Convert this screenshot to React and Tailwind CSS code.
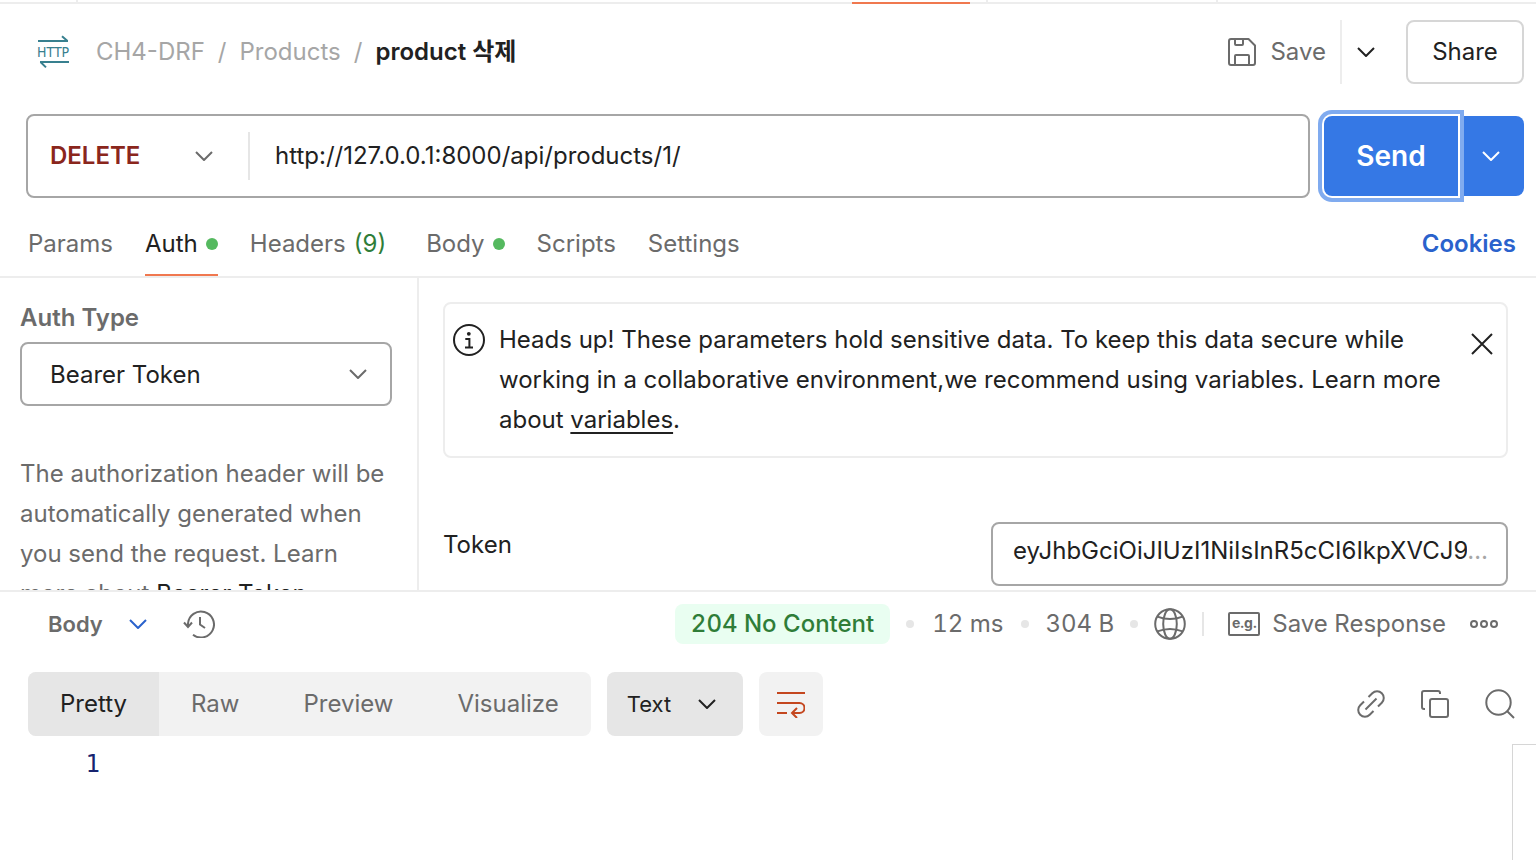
import React from "react";

const FONT = "font-['Inter','Noto_Sans_CJK_KR',sans-serif]";

function Svg({ w, h, className = "", sw = 2, children }) {
  return (
    <svg
      width={w}
      height={h}
      viewBox={`0 0 ${w} ${h}`}
      fill="none"
      stroke="currentColor"
      strokeWidth={sw}
      className={`shrink-0 ${className}`}
      aria-hidden="true"
    >
      {children}
    </svg>
  );
}

function Chevron({ className = "" }) {
  return (
    <Svg w={18} h={12} className={className}>
      <path d="M1 2L9 10L17 2" strokeLinejoin="round" />
    </Svg>
  );
}

function HttpIcon() {
  return (
    <Svg w={36} h={34} className="text-[#38808f]">
      <path d="M2 6H32M26 1.2L31.5 6" />
      <path d="M33 27H4M10 32.4L4.5 27" />
      <text
        x="1"
        y="21.5"
        fill="currentColor"
        stroke="none"
        className="font-['DejaVu_Sans_Condensed','DejaVu_Sans',sans-serif] text-[14px]"
      >
        HTTP
      </text>
    </Svg>
  );
}

function SaveIcon() {
  return (
    <Svg w={28} h={28}>
      <path d="M3 1H20.5L27 7.5V25a2 2 0 0 1-2 2H3a2 2 0 0 1-2-2V3a2 2 0 0 1 2-2Z" strokeLinejoin="round" />
      <path d="M7 1V6a1 1 0 0 0 1 1h6a1 1 0 0 0 1-1V1M7 27V18a1 1 0 0 1 1-1H20a1 1 0 0 1 1 1V27" />
    </Svg>
  );
}

function InfoIcon() {
  return (
    <Svg w={32} h={32}>
      <circle cx="16" cy="16" r="15" />
      <circle cx="15.8" cy="9.8" r="1.9" fill="currentColor" stroke="none" />
      <path d="M12.3 15H16.4V23.2M12 23.6H20" />
    </Svg>
  );
}

function CloseIcon() {
  return (
    <Svg w={22} h={22}>
      <path d="M1 1L21 21M21 1L1 21" />
    </Svg>
  );
}

function HistoryIcon() {
  return (
    <Svg w={32} h={28}>
      <path d="M5 16.5V13.5A13 13 0 1 1 10 24.8" />
      <path d="M1 12.5L5 17L9 12.5" />
      <path d="M17 7V14.5L22 18" />
    </Svg>
  );
}

function GlobeIcon() {
  return (
    <Svg w={32} h={32}>
      <circle cx="16" cy="16" r="14.8" />
      <ellipse cx="16" cy="16" rx="6.8" ry="14.8" />
      <path d="M3.4 8.6Q16 13.6 28.6 8.6M3.4 23.4Q16 18.4 28.6 23.4" />
    </Svg>
  );
}

function MoreIcon() {
  return (
    <Svg w={28} h={10}>
      <circle cx="4" cy="5" r="3" />
      <circle cx="14" cy="5" r="3" />
      <circle cx="24" cy="5" r="3" />
    </Svg>
  );
}

function WrapIcon() {
  return (
    <Svg w={28} h={28}>
      <path d="M0 3H28M0 13H22.5a4.8 4.8 0 0 1 0 10H15.5M0 23H10" />
      <path d="M20 18L15 23L20 28" />
    </Svg>
  );
}

function LinkIcon() {
  return (
    <Svg w={28} h={28}>
      <path d="M8.5 19.5L19.5 8.5" />
      <path d="M11.5 7L15.3 3.2A6.6 6.6 0 0 1 24.8 12.7L21 16.5" />
      <path d="M7 11.5L3.2 15.3A6.6 6.6 0 0 0 12.7 24.8L16.5 21" />
    </Svg>
  );
}

function CopyIcon() {
  return (
    <Svg w={28} h={28}>
      <rect x="9" y="9" width="18" height="18" rx="2" />
      <path d="M4 19H3a2 2 0 0 1-2-2V3a2 2 0 0 1 2-2H17a2 2 0 0 1 2 2V4" />
    </Svg>
  );
}

function SearchIcon() {
  return (
    <Svg w={30} h={30}>
      <circle cx="13.5" cy="13.5" r="12.2" />
      <path d="M22 22L29 29" />
    </Svg>
  );
}

/* Native select with the arrow laid over its right end. */
function Select({ label, id, options, className, chevron, wrap = "" }) {
  return (
    <div className={`relative flex items-center ${wrap}`}>
      <select id={id} aria-label={label} className={`w-full appearance-none bg-transparent outline-none ${className}`}>
        {options.map((o) => (
          <option key={o}>{o}</option>
        ))}
      </select>
      <Chevron className={`pointer-events-none absolute ${chevron}`} />
    </div>
  );
}

function Dot() {
  return <span className="size-3 shrink-0 rounded-full bg-[#55b95f]" />;
}

function Tab({ active, children }) {
  return (
    <button
      role="tab"
      aria-selected={!!active}
      className={`flex items-center gap-2 border-b-2 py-1 ${
        active ? "border-[#f0784f] text-[#212121]" : "border-transparent text-[#6b6b6b]"
      }`}
    >
      {children}
    </button>
  );
}

function TabStrip() {
  return (
    <div className="flex h-1 border-b-2 border-[#ededed]">
      <span className="w-[78px] border-r-2 border-[#ededed]" />
      <span className="w-[774px]" />
      <span className="h-1 w-[118px] shrink-0 border-b-2 border-[#f0784f]" />
      <span className="w-[18px] border-r-2 border-[#ededed]" />
      <span className="w-[230px] border-r-2 border-[#ededed]" />
    </div>
  );
}

function Header() {
  return (
    <header className="flex h-16 items-center pr-3 pl-9">
      <HttpIcon />
      <nav aria-label="Breadcrumb" className="ml-6 flex gap-[13px] text-[#a6a6a6]">
        <a href="#collection">CH4-DRF</a>
        <span>/</span>
        <a href="#folder">Products</a>
        <span>/</span>
        <h1 className="font-semibold text-[#212121]">product 삭제</h1>
      </nav>
      <div className="ml-auto flex h-full items-center">
        <button className="flex h-full items-center gap-3.5 border-r-2 border-[#ededed] pr-3.5 text-[#6b6b6b]">
          <SaveIcon />
          Save
        </button>
        <button aria-label="Save options" className="flex h-full items-center px-[15px] text-[#212121]">
          <Chevron />
        </button>
        <button className="ml-4 h-full w-[118px] rounded-lg border-2 border-[#d6d6d6] text-[#212121]">Share</button>
      </div>
    </header>
  );
}

function UrlBar() {
  return (
    <form className="mt-[30px] flex items-center pr-3 pl-[26px]" onSubmit={(e) => e.preventDefault()}>
      <div className="flex h-[84px] flex-1 items-center rounded-lg border-2 border-[#a6a6a6]">
        <Select
          label="HTTP method"
          options={["DELETE", "GET", "POST", "PUT", "PATCH"]}
          wrap="h-12 w-[222px] border-r-2 border-[#e6e6e6] text-[#6b6b6b]"
          className="pl-[22px] font-semibold text-[#8a261c]"
          chevron="right-[35px]"
        />
        <input
          aria-label="Request URL"
          defaultValue="http://127.0.0.1:8000/api/products/1/"
          className="min-w-0 flex-1 bg-transparent px-[25px] text-[#212121] outline-none"
        />
      </div>
      <button
        type="submit"
        className="z-10 ml-3.5 h-20 w-[134px] rounded-l-lg bg-[#3578e5] text-[28px] font-semibold text-white shadow-[0_0_0_2px_#ffffff,0_0_0_6px_#80abef]"
      >
        Send
      </button>
      <button
        type="button"
        aria-label="Send options"
        className="flex h-20 w-[66px] items-center justify-center rounded-r-lg bg-[#3578e5] text-white"
      >
        <Chevron />
      </button>
    </form>
  );
}

function RequestTabs() {
  return (
    <div className="mt-4 flex h-16 items-end justify-between border-b-2 border-[#ededed] pr-5 pl-7">
      <div role="tablist" aria-label="Request" className="flex h-full items-stretch gap-8">
        <Tab>Params</Tab>
        <Tab active>
          Auth
          <Dot />
        </Tab>
        <Tab>
          Headers <span className="mr-2 text-[#2f7d38]">(9)</span>
        </Tab>
        <Tab>
          Body
          <Dot />
        </Tab>
        <Tab>Scripts</Tab>
        <Tab>Settings</Tab>
      </div>
      <button className="mb-4 font-semibold text-[#2a62cc]">Cookies</button>
    </div>
  );
}

function AuthPanel() {
  return (
    <section className="flex h-[314px] overflow-hidden border-b-2 border-[#ededed]">
      <div className="w-[419px] shrink-0 border-r-2 border-[#ededed] px-5 pt-5 pr-[25px] text-[#6b6b6b]">
        <label htmlFor="auth-type" className="block leading-10 font-semibold">
          Auth Type
        </label>
        <Select
          id="auth-type"
          options={["Bearer Token", "No Auth", "Basic Auth", "API Key"]}
          wrap="mt-1 h-16 w-full rounded-lg border-2 border-[#a6a6a6]"
          className="h-full pt-0.5 pl-7 text-[#212121]"
          chevron="right-[23px]"
        />
        <p className="-mr-4 mt-12 leading-10">
          The authorization header will be
          <br />
          automatically generated when
          <br />
          you send the request. Learn
          <br />
          more about{" "}
          <a href="#bearer" className="text-[#212121]">
            Bearer Token
          </a>
        </p>
      </div>
      <div className="min-w-0 flex-1 pt-6 pr-7 pl-6 text-[#212121]">
        <div role="note" className="flex items-start rounded-lg border-2 border-[#ededed] py-4 pr-[13px] pl-2">
          <span className="mt-1">
            <InfoIcon />
          </span>
          <p className="ml-3.5 flex-1 leading-10">
            Heads up! These parameters hold sensitive data. To keep this data secure while
            <br />
            working in a collaborative environment,we recommend using variables. Learn more
            <br />
            about{" "}
            <a href="#variables" className="underline decoration-2 underline-offset-4">
              variables
            </a>
            .
          </p>
          <button aria-label="Dismiss" className="mt-[13px]">
            <CloseIcon />
          </button>
        </div>
        <div className="mt-16 flex items-start justify-between">
          <label htmlFor="token" className="pt-[7px]">
            Token
          </label>
          <div className="flex h-16 w-[517px] items-start rounded-lg border-2 border-[#a6a6a6] pt-[11px] pr-[18px] pl-5">
            <input
              id="token"
              defaultValue="eyJhbGciOiJIUzI1NiIsInR5cCI6IkpXVCJ9"
              className="min-w-0 flex-1 bg-transparent outline-none"
            />
            <span className="text-[#a6a6a6]">…</span>
          </div>
        </div>
      </div>
    </section>
  );
}

function Sep() {
  return <span className="size-2 shrink-0 rounded-full bg-[#e6e6e6]" />;
}

function ResponseBar() {
  return (
    <div className="flex h-16 items-center justify-between pr-[38px] pl-12 text-[#6b6b6b]">
      <div className="flex items-center">
        <button className="flex items-center gap-[26px] text-[22px] font-semibold">
          Body
          <Chevron className="text-[#2a62cc]" />
        </button>
        <button aria-label="History" className="ml-9">
          <HistoryIcon />
        </button>
      </div>
      <div className="flex items-center gap-4 tabular-nums">
        <span className="rounded-lg bg-[#e9fef1] px-4 leading-10 font-medium text-[#2f7d38]">204 No Content</span>
        <Sep />
        <span className="px-0.5">12 ms</span>
        <Sep />
        <span>304 B</span>
        <Sep />
        <button aria-label="Network">
          <GlobeIcon />
        </button>
        <span className="h-6 w-0.5 bg-[#e6e6e6]" />
        <button className="ml-2 flex items-center gap-3">
          <span className="flex h-6 w-8 items-center justify-center rounded-xs border-2 border-current pb-0.5 text-[14px] leading-none font-bold">
            e.g.
          </span>
          Save Response
        </button>
        <button aria-label="More actions" className="ml-2">
          <MoreIcon />
        </button>
      </div>
    </div>
  );
}

function ViewBar() {
  const modes = ["Pretty", "Raw", "Preview", "Visualize"];
  return (
    <div className="mt-4 flex h-16 items-center gap-4 pr-[21px] pl-7">
      <div role="tablist" aria-label="View" className="flex h-full overflow-hidden rounded-lg bg-[#f2f2f2]">
        {modes.map((m, i) => (
          <button
            key={m}
            role="tab"
            aria-selected={i === 0}
            className={i === 0 ? "bg-[#e6e6e6] px-8 text-[#212121]" : "px-8 text-[#6b6b6b]"}
          >
            {m}
          </button>
        ))}
      </div>
      <Select
        label="Format"
        options={["Text", "JSON", "XML", "HTML"]}
        wrap="h-full w-[136px] rounded-lg bg-[#e6e6e6] text-[#212121]"
        className="h-full pl-5 text-[22px]"
        chevron="right-[27px]"
      />
      <button
        aria-label="Wrap lines"
        className="flex size-16 items-center justify-center rounded-lg bg-[#f2f2f2] text-[#c4471f]"
      >
        <WrapIcon />
      </button>
      <div className="ml-auto flex items-center gap-9 text-[#6b6b6b]">
        <button aria-label="Copy link">
          <LinkIcon />
        </button>
        <button aria-label="Copy">
          <CopyIcon />
        </button>
        <button aria-label="Search">
          <SearchIcon />
        </button>
      </div>
    </div>
  );
}

export default function App() {
  return (
    <main className={`flex min-h-screen flex-col bg-white text-[24px] leading-8 ${FONT}`}>
      <TabStrip />
      <div className="pt-4">
        <Header />
      </div>
      <UrlBar />
      <RequestTabs />
      <AuthPanel />
      <ResponseBar />
      <ViewBar />
      <div className="mt-2 flex flex-1">
        <div className="w-[100px] pt-1 text-right font-['DejaVu_Sans_Mono',monospace] text-[#17236f]">1</div>
        <div className="ml-auto w-6 border-t border-l border-[#d6d6d6]" />
      </div>
    </main>
  );
}
